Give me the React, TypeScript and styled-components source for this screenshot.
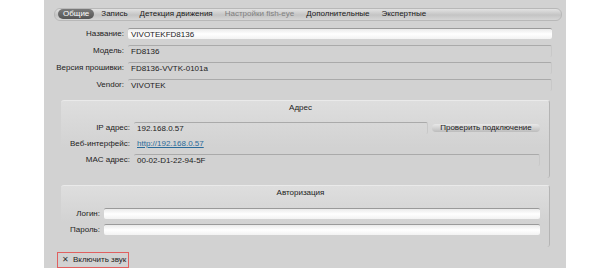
import styled, { createGlobalStyle } from 'styled-components';

const GlobalStyle = createGlobalStyle`
  html, body {
    margin: 0;
    padding: 0;
    background: #ffffff;
  }
  body {
    font-family: 'Liberation Sans', Arial, sans-serif;
    font-size: 8px;
    color: #222;
  }
`;

const Page = styled.div`
  width: 605px;
  height: 268px;
  display: flex;
  justify-content: flex-start;
  overflow: hidden;
`;

const Panel = styled.div`
  margin-left: 44px;
  width: 522px;
  height: 268px;
  background: #d2d2d2;
  padding: 8px 10px 0 10px;
  box-sizing: border-box;
  display: flex;
  flex-direction: column;
`;

const TabBar = styled.div`
  height: 11px;
  width: 503px;
  border-radius: 6px;
  border: 1px solid #b8b8b8;
  background: linear-gradient(#e2e2e2, #c4c4c4 55%, #d6d6d6);
  display: flex;
  align-items: center;
  padding-left: 3px;
  box-sizing: content-box;
`;

const Tab = styled.div<{ $active?: boolean; $muted?: boolean }>`
  height: 10px;
  line-height: 10px;
  padding: 0 5px;
  margin-right: 2px;
  border-radius: 5px;
  font-size: 8px;
  white-space: nowrap;
  color: ${(p) => (p.$active ? '#fff' : p.$muted ? '#808080' : '#1a1a1a')};
  background: ${(p) => (p.$active ? 'linear-gradient(#7a7a7a, #555)' : 'transparent')};
`;

const Rows = styled.div`
  display: flex;
  flex-direction: column;
  gap: 5px;
  margin-top: 7px;
  padding-right: 4px;
`;

const Row = styled.div<{ $labelWidth: number }>`
  display: grid;
  grid-template-columns: ${(p) => p.$labelWidth}px 1fr;
  column-gap: 4px;
  align-items: center;
  height: 12px;
`;

const Label = styled.div`
  text-align: right;
  white-space: nowrap;
  font-size: 8px;
`;

const Input = styled.div`
  height: 11px;
  line-height: 11px;
  border-radius: 2px;
  border-top: 1px solid #9a9a9a;
  background: linear-gradient(#eaeaea, #ffffff 50%, #f2f2f2);
  padding-left: 3px;
  font-size: 8px;
  box-sizing: border-box;
`;

const ReadOnly = styled.div`
  height: 12px;
  line-height: 12px;
  border-radius: 2px;
  border-top: 1px solid #aaaaaa;
  border-right: 1px solid #c8c8c8;
  padding-left: 3px;
  font-size: 8px;
  box-sizing: border-box;
`;

const Group = styled.div<{ $top: number; $bottom: number }>`
  margin: ${(p) => p.$top}px 6px 0 7px;
  border-radius: 3px;
  border-top: 1px solid #eaeaea;
  border-right: 1px solid #b4b4b4;
  background: linear-gradient(#dedede, #d2d2d2 60%);
  padding: 2px 9px ${(p) => p.$bottom}px 0;
  display: flex;
  flex-direction: column;
`;

const GroupTitle = styled.div`
  text-align: center;
  font-size: 8px;
  height: 12px;
`;

const GroupRows = styled.div<{ $top: number }>`
  display: flex;
  flex-direction: column;
  gap: 4px;
  margin-top: ${(p) => p.$top}px;
`;

const Split = styled.div`
  display: flex;
  gap: 4px;
  align-items: center;
`;

const Grow = styled(ReadOnly)`
  flex: 1;
`;

const Button = styled.div`
  width: 108px;
  height: 8px;
  line-height: 8px;
  border-radius: 4px;
  background: linear-gradient(#e8e8e8, #bcbcbc);
  text-align: center;
  font-size: 8px;
`;

const Link = styled.a`
  color: #2a6b9a;
  text-decoration: underline;
  font-size: 8px;
  padding-left: 3px;
`;

const CheckRow = styled.div`
  margin-top: 5px;
  margin-left: 3px;
  width: 72px;
  height: 17px;
  border: 1px solid #e06060;
  display: flex;
  align-items: center;
  gap: 4px;
  padding-left: 4px;
  box-sizing: border-box;
  font-size: 8px;
  white-space: nowrap;
`;

const Cross = styled.span`
  font-size: 8px;
  color: #333;
`;

const App = () => {
  return (
    <Page>
      <GlobalStyle />
      <Panel>
        <TabBar>
          <Tab $active>Общие</Tab>
          <Tab>Запись</Tab>
          <Tab>Детекция движения</Tab>
          <Tab $muted>Настройки fish-eye</Tab>
          <Tab>Дополнительные</Tab>
          <Tab>Экспертные</Tab>
        </TabBar>

        <Rows>
          <Row $labelWidth={70}>
            <Label>Название:</Label>
            <Input>VIVOTEKFD8136</Input>
          </Row>
          <Row $labelWidth={70}>
            <Label>Модель:</Label>
            <ReadOnly>FD8136</ReadOnly>
          </Row>
          <Row $labelWidth={70}>
            <Label>Версия прошивки:</Label>
            <ReadOnly>FD8136-VVTK-0101a</ReadOnly>
          </Row>
          <Row $labelWidth={70}>
            <Label>Vendor:</Label>
            <ReadOnly>VIVOTEK</ReadOnly>
          </Row>
        </Rows>

        <Group $top={9} $bottom={12}>
          <GroupTitle>Адрес</GroupTitle>
          <GroupRows $top={7}>
            <Row $labelWidth={69}>
              <Label>IP адрес:</Label>
              <Split>
                <Grow>192.168.0.57</Grow>
                <Button>Проверить подключение</Button>
              </Split>
            </Row>
            <Row $labelWidth={69}>
              <Label>Веб-интерфейс:</Label>
              <div>
                <Link href="#">http://192.168.0.57</Link>
              </div>
            </Row>
            <Row $labelWidth={69}>
              <Label>MAC адрес:</Label>
              <ReadOnly>00-02-D1-22-94-5F</ReadOnly>
            </Row>
          </GroupRows>
        </Group>

        <Group $top={7} $bottom={11}>
          <GroupTitle>Авторизация</GroupTitle>
          <GroupRows $top={8}>
            <Row $labelWidth={39}>
              <Label>Логин:</Label>
              <Input />
            </Row>
            <Row $labelWidth={39}>
              <Label>Пароль:</Label>
              <Input />
            </Row>
          </GroupRows>
        </Group>

        <CheckRow>
          <Cross>✕</Cross>
          <span>Включить звук</span>
        </CheckRow>
      </Panel>
    </Page>
  );
};

export default App;
